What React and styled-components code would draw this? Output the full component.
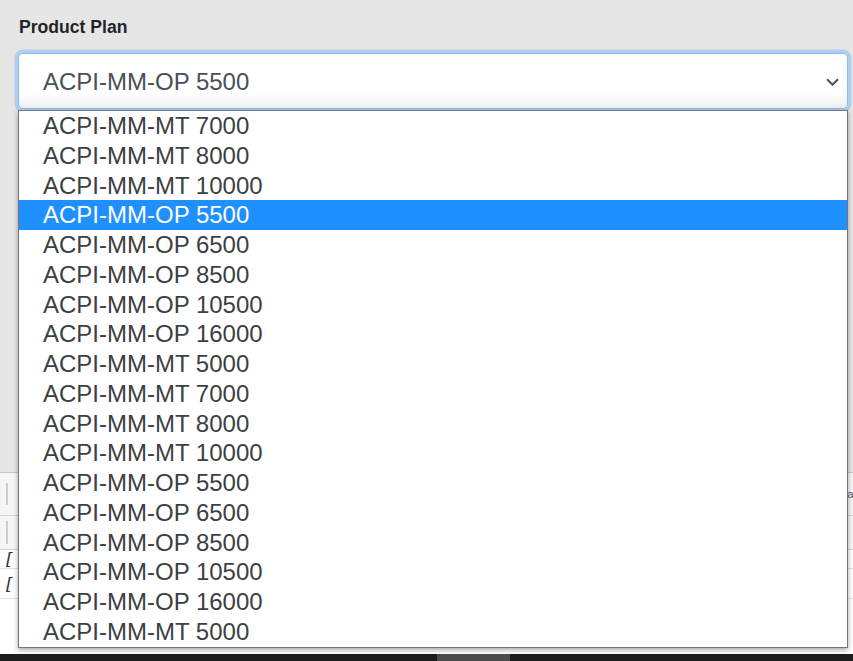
import React from "react";
import styled, { createGlobalStyle } from "styled-components";

const GlobalStyle = createGlobalStyle`
  html, body {
    margin: 0;
    padding: 0;
    background: #e6e6e6;
    overflow: hidden;
    font-family: "Liberation Sans", Arial, sans-serif;
  }
`;

const Page = styled.div`
  display: flex;
  flex-direction: column;
  height: 661px;
  width: 853px;
`;

const FormArea = styled.div`
  flex: none;
  height: 472px;
  box-sizing: border-box;
  padding: 17px 5px 0 18px;
`;

const Label = styled.label`
  display: block;
  font-size: 17.6px;
  line-height: 20px;
  font-weight: 700;
  color: #212529;
  margin: 0 0 16px 1px;
`;

const SelectWrap = styled.div`
  position: relative;
`;

const SelectBox = styled.div`
  height: 56px;
  box-sizing: border-box;
  display: flex;
  align-items: center;
  justify-content: space-between;
  padding: 2px 8px 0 24px;
  border: 1px solid #80bdff;
  border-radius: 5px;
  background: linear-gradient(#ffffff 0%, #ffffff 72%, #efefef 100%);
  box-shadow: 0 0 0 3.5px rgba(0, 123, 255, 0.22);
  font-size: 24px;
  color: #495057;
`;

const OptionList = styled.ul`
  position: absolute;
  top: calc(100% + 1px);
  left: 0;
  right: 0;
  height: 538px;
  margin: 0;
  padding: 0;
  list-style: none;
  overflow: hidden;
  box-sizing: border-box;
  background: #fff;
  border: 1px solid #767676;
  box-shadow: 0 2px 5px rgba(0, 0, 0, 0.35);
  z-index: 2;
`;

const Option = styled.li`
  height: 29.76px;
  line-height: 29.76px;
  padding-left: 24px;
  font-size: 24px;
  white-space: nowrap;
  color: ${(p) => (p.$selected ? "#ffffff" : "#3d4043")};
  background: ${(p) => (p.$selected ? "#1e90ff" : "transparent")};
`;

const Editor = styled.div`
  flex: 1;
  display: flex;
  flex-direction: column;
  background: #ffffff;
  border-top: 1px solid #c8c8c8;
`;

const ToolRow = styled.div`
  display: flex;
  align-items: center;
  height: ${(p) => p.$h}px;
  padding: 0 0 0 6px;
  background: #f6f6f6;
  border-bottom: 1px solid #d2d2d2;
`;

const Separator = styled.span`
  display: block;
  width: 2px;
  height: ${(p) => p.$h}px;
  background: #cdcdcd;
`;

const ToolText = styled.span`
  margin-left: auto;
  font-size: 11px;
  letter-spacing: -0.5px;
  color: #555;
`;

const CodeLine = styled.div`
  height: ${(p) => p.$h}px;
  padding-left: 6px;
  display: flex;
  align-items: center;
  font-family: "DejaVu Serif", serif;
  font-style: italic;
  font-size: 17px;
  color: #333;
  border-bottom: 1px solid #e2e2e2;
`;

const CodeBody = styled.div`
  flex: 1;
`;

const ScrollTrack = styled.div`
  flex: none;
  height: 7px;
  background: #1c1c1c;
  display: flex;
`;

const ScrollThumb = styled.div`
  margin-left: 437px;
  width: 73px;
  background: #4b4b4b;
`;

const Chevron = () => (
  <svg width="13" height="8" viewBox="0 0 13 8" fill="none">
    <path d="M1 1.2l5.5 5.5 5.5-5.5" stroke="#495057" strokeWidth="2" />
  </svg>
);

const plans = [
  "ACPI-MM-MT 7000",
  "ACPI-MM-MT 8000",
  "ACPI-MM-MT 10000",
  "ACPI-MM-OP 5500",
  "ACPI-MM-OP 6500",
  "ACPI-MM-OP 8500",
  "ACPI-MM-OP 10500",
  "ACPI-MM-OP 16000",
  "ACPI-MM-MT 5000",
  "ACPI-MM-MT 7000",
  "ACPI-MM-MT 8000",
  "ACPI-MM-MT 10000",
  "ACPI-MM-OP 5500",
  "ACPI-MM-OP 6500",
  "ACPI-MM-OP 8500",
  "ACPI-MM-OP 10500",
  "ACPI-MM-OP 16000",
  "ACPI-MM-MT 5000",
];

export default function App() {
  return (
    <>
      <GlobalStyle />
      <Page>
        <FormArea>
          <Label>Product Plan</Label>
          <SelectWrap>
            <SelectBox>
              <span>ACPI-MM-OP 5500</span>
              <Chevron />
            </SelectBox>
            <OptionList>
              {plans.map((p, i) => (
                <Option key={i} $selected={i === 3}>
                  {p}
                </Option>
              ))}
            </OptionList>
          </SelectWrap>
        </FormArea>
        <Editor>
          <ToolRow $h={42}>
            <Separator $h={22} />
            <ToolText>ca</ToolText>
          </ToolRow>
          <ToolRow $h={33}>
            <Separator $h={23} />
          </ToolRow>
          <CodeLine $h={18}>[</CodeLine>
          <CodeLine $h={29}>[</CodeLine>
          <CodeBody />
        </Editor>
        <ScrollTrack>
          <ScrollThumb />
        </ScrollTrack>
      </Page>
    </>
  );
}
